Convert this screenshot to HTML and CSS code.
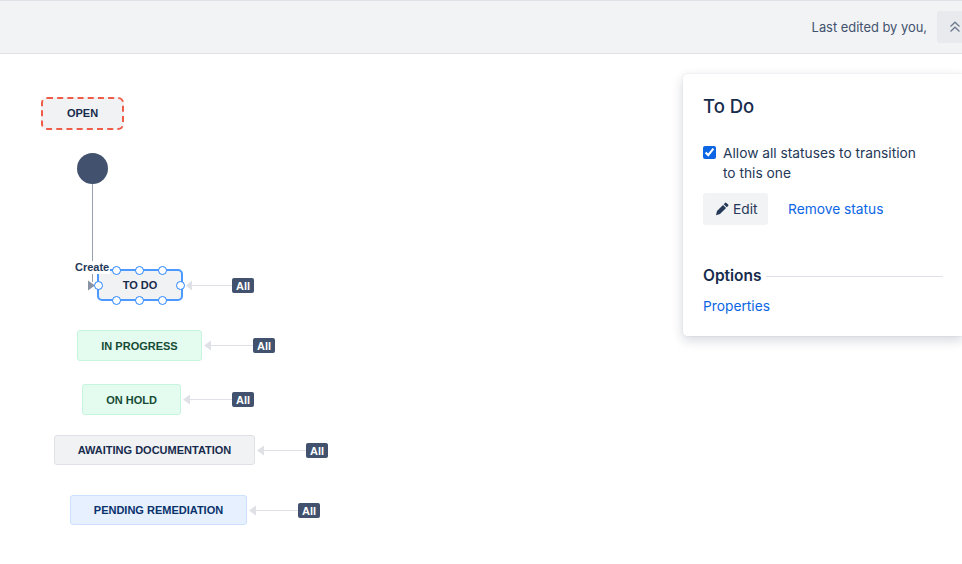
FILE: index.html
```html
<!DOCTYPE html>
<html lang="en">

<head>
    <meta charset="UTF-8">
    <title>Workflow editor</title>
    <link rel="stylesheet" href="styles.css">
</head>

<body>
    <header class="topbar">
        <span class="last-edited">Last edited by you,</span>
        <button class="collapse-btn" aria-label="Collapse">
            <svg width="12" height="12" viewBox="0 0 12 12" fill="none" stroke="#6b778c" stroke-width="1.2">
                <path d="M1.500 5.500 6 1.200l4.500 4.300" />
                <path d="M1.500 10.500 6 6.200l4.500 4.300" />
            </svg>
        </button>
    </header>

    <main class="canvas">
        <svg class="edges" width="962" height="510" viewBox="0 54 962 510">
            <circle cx="92.500" cy="168.500" r="15.500" fill="#42526e" />
            <path d="M92.500 184V282" stroke="#97a0af" stroke-width="1" />
            <path d="M88 280.500 95 285.500 88 290.500Z" fill="#8993a4" />

            <g stroke="#dfe1e6" stroke-width="1">
                <path d="M190 285.500H233" />
                <path d="M210 345.500H254" />
                <path d="M190 399.500H233" />
                <path d="M264 450.500H307" />
                <path d="M256 510.500H299" />
            </g>
            <g fill="#dfe1e6">
                <path d="M186 285.500 192 280.500V290.500Z" />
                <path d="M204 345.500 211 340.500V350.500Z" />
                <path d="M183 399.500 190 394.500V404.500Z" />
                <path d="M257 450.500 264 445.500V455.500Z" />
                <path d="M249 510.500 256 505.500V515.500Z" />
            </g>
        </svg>

        <div class="node node-grey node-open">OPEN</div>
        <div class="node node-grey node-selected node-todo">TO DO</div>
        <div class="node node-green node-progress">IN PROGRESS</div>
        <div class="node node-green node-hold">ON HOLD</div>
        <div class="node node-grey node-awaiting">AWAITING DOCUMENTATION</div>
        <div class="node node-blue node-pending">PENDING REMEDIATION</div>

        <span class="edge-label">Create</span>

        <span class="handle h1"></span>
        <span class="handle h2"></span>
        <span class="handle h3"></span>
        <span class="handle h4"></span>
        <span class="handle h5"></span>
        <span class="handle h6"></span>
        <span class="handle h7"></span>
        <span class="handle h8"></span>

        <span class="badge b-todo">All</span>
        <span class="badge b-progress">All</span>
        <span class="badge b-hold">All</span>
        <span class="badge b-awaiting">All</span>
        <span class="badge b-pending">All</span>

        <aside class="panel">
            <h2 class="panel-title">To Do</h2>
            <label class="panel-check">
                <input type="checkbox" checked>
                <span>Allow all statuses to transition to this one</span>
            </label>
            <div class="panel-actions">
                <button class="edit-btn">
                    <svg width="14" height="14" viewBox="0 0 14 14" fill="#253858">
                        <path d="M10 .900a1 1 0 0 1 1.400 0l1.700 1.700a1 1 0 0 1 0 1.400L11.800 5.300 8.700 2.200Z" />
                        <path d="M8 2.900 11.100 6 5 12.100 1 13.300 2 9Z" />
                    </svg>
                    Edit
                </button>
                <a class="link" href="#">Remove status</a>
            </div>
            <div class="panel-section">
                <h3>Options</h3>
                <span class="rule"></span>
            </div>
            <a class="link" href="#">Properties</a>
        </aside>
    </main>
</body>

</html>
```

FILE: styles.css
```css
*,
*::after,
*::before {
    box-sizing: border-box;
    padding: 0;
    margin: 0;
}

body {
    display: flex;
    flex-direction: column;
    width: 962px;
    height: 564px;
    overflow: hidden;
    background-color: #fff;
    font-family: Inter, "Liberation Sans", sans-serif;
    color: #172b4d;
}

.topbar {
    height: 54px;
    flex-shrink: 0;
    display: flex;
    align-items: center;
    justify-content: flex-end;
    padding-bottom: 1px;
    background-color: #f2f3f5;
    border-top: 1px solid #dfe1e6;
    border-bottom: 1px solid #dfe1e6;
}

.last-edited {
    font-size: 12.900px;
    color: #42526e;
    margin-top: 2px;
    margin-right: 10px;
}

.collapse-btn {
    width: 25px;
    height: 32px;
    display: flex;
    align-items: center;
    padding-left: 12px;
    border: none;
    border-radius: 3px 0 0 3px;
    background-color: #e9eaee;
}

.canvas {
    position: relative;
    flex: 1;
    overflow: hidden;
}

.edges {
    position: absolute;
    left: 0;
    top: 0;
}

/* workflow nodes, top offsets are relative to the canvas (54px under the page top) */
.node {
    position: absolute;
    display: flex;
    align-items: center;
    justify-content: center;
    height: 30px;
    border-radius: 3px;
    border: 1px solid;
    font-family: "Liberation Sans", Arial, sans-serif;
    font-size: 11px;
    font-weight: bold;
}

.node-grey {
    background-color: #f1f2f4;
    border-color: #dfe1e6;
    color: #172b4d;
}

.node-green {
    background-color: #e3fcef;
    border-color: #c5f5dd;
    color: #164b35;
}

.node-blue {
    background-color: #e6f0ff;
    border-color: #cce0ff;
    color: #09326c;
}

.node-open {
    left: 41px;
    top: 43px;
    width: 83px;
    height: 33px;
    padding-bottom: 1px;
    border: 2px dashed #ef5c48;
    border-radius: 6px;
}

.node-selected {
    border: 2px solid #4c9aff;
    border-radius: 5px;
}

.node-todo {
    left: 97px;
    top: 215px;
    width: 86px;
    height: 32px;
}

.node-progress {
    left: 77px;
    top: 276px;
    width: 125px;
    height: 31px;
}

.node-hold {
    left: 82px;
    top: 330px;
    width: 99px;
    height: 31px;
}

.node-awaiting {
    left: 54px;
    top: 381px;
    width: 201px;
}

.node-pending {
    left: 70px;
    top: 441px;
    width: 177px;
}

.edge-label {
    position: absolute;
    left: 74px;
    top: 207px;
    padding: 0 1px;
    background-color: #fff;
    font-family: "Liberation Sans", Arial, sans-serif;
    font-size: 11px;
    font-weight: bold;
    line-height: 13px;
    color: #253858;
}

.handle {
    position: absolute;
    width: 9px;
    height: 9px;
    border-radius: 50%;
    background-color: #fff;
    border: 1px solid #2684ff;
}

.h1 { left: 112px; top: 212px; }
.h2 { left: 135px; top: 212px; }
.h3 { left: 158px; top: 212px; }
.h4 { left: 112px; top: 242px; }
.h5 { left: 135px; top: 242px; }
.h6 { left: 158px; top: 242px; }
.h7 { left: 94px; top: 227px; }
.h8 { left: 176px; top: 227px; }

.badge {
    position: absolute;
    display: flex;
    align-items: center;
    justify-content: center;
    width: 22px;
    height: 15px;
    border-radius: 2px;
    background-color: #42526e;
    color: #fff;
    font-family: "Liberation Sans", Arial, sans-serif;
    font-size: 11px;
    font-weight: bold;
}

.b-todo { left: 232px; top: 224px; }
.b-progress { left: 253px; top: 284px; }
.b-hold { left: 232px; top: 338px; }
.b-awaiting { left: 306px; top: 389px; }
.b-pending { left: 298px; top: 449px; }

/* side panel */
.panel {
    position: absolute;
    left: 683px;
    top: 20px;
    width: 280px;
    height: 262px;
    padding: 20px;
    background-color: #fff;
    border-radius: 4px 0 0 4px;
    box-shadow: 0 4px 12px rgba(9, 30, 66, 0.18), 0 0 1px rgba(9, 30, 66, 0.2);
}

.panel-title {
    font-size: 18.500px;
    font-weight: 500;
    line-height: 24px;
    margin-bottom: 25px;
}

.panel-check {
    display: flex;
    gap: 7px;
    width: 215px;
    font-size: 13.750px;
    line-height: 20px;
    color: #253858;
}

.panel-check input {
    width: 13px;
    height: 13px;
    margin-top: 3px;
    flex-shrink: 0;
    accent-color: #0c66e4;
}

.panel-actions {
    display: flex;
    align-items: center;
    gap: 20px;
    margin-top: 10px;
}

.edit-btn {
    display: flex;
    align-items: center;
    gap: 4px;
    width: 65px;
    height: 32px;
    padding-left: 12px;
    border: none;
    border-radius: 3px;
    background-color: #f2f3f5;
    color: #253858;
    font-family: inherit;
    font-size: 13.750px;
}

.link {
    font-size: 13.750px;
    line-height: 20px;
    color: #0c66e4;
    text-decoration: none;
}

.panel-section {
    display: flex;
    align-items: center;
    gap: 4px;
    margin-top: 40px;
    margin-bottom: 8px;
}

.panel-section h3 {
    font-size: 15.500px;
    font-weight: 600;
    line-height: 22px;
}

.rule {
    flex: 1;
    height: 1px;
    background-color: #dfe1e6;
}
```
